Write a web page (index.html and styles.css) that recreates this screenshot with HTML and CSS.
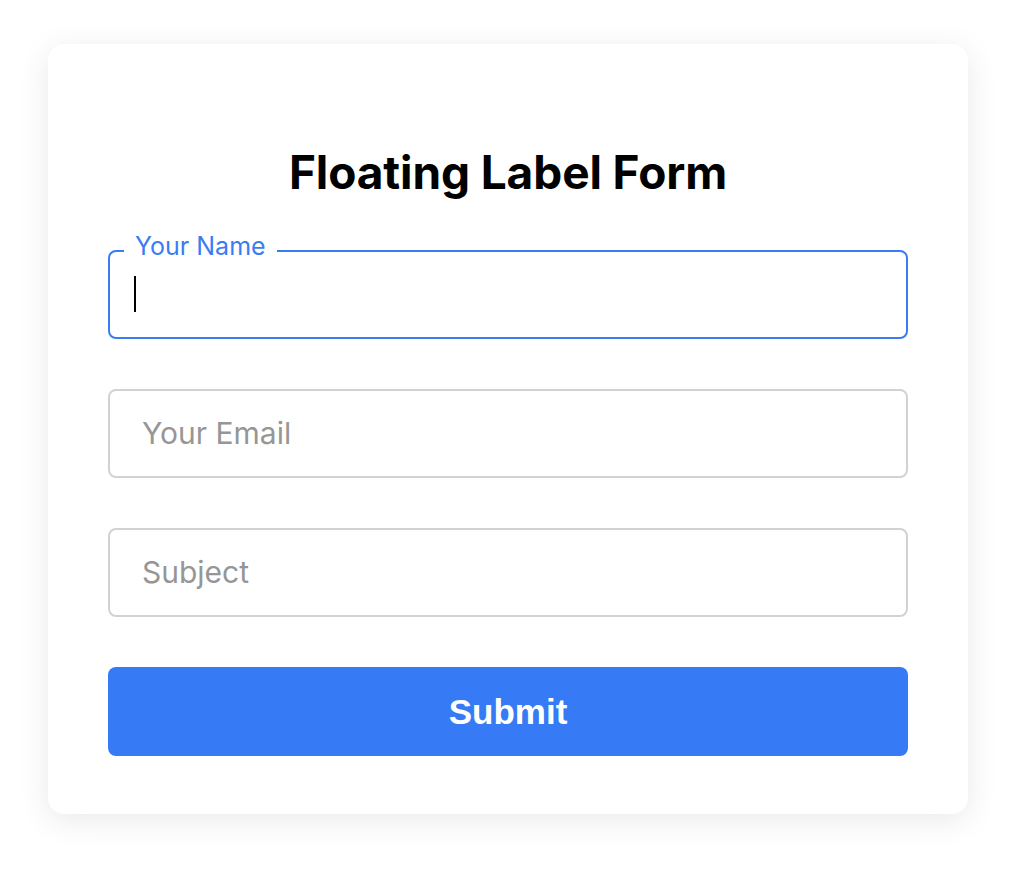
FILE: index.html
```html
<!DOCTYPE html>
<html lang="en">
<head>
<meta charset="utf-8">
<title>Floating Label Form</title>
<link rel="stylesheet" href="styles.css">
</head>
<body>
  <form class="card">
    <h1 class="title">Floating Label Form</h1>
    <div class="fields">
      <div class="field is-focused">
        <input class="input" type="text" id="name">
        <label class="float-label" for="name">Your Name</label>
        <span class="caret"></span>
      </div>
      <div class="field">
        <input class="input" type="email" id="email" placeholder="Your Email">
      </div>
      <div class="field">
        <input class="input" type="text" id="subject" placeholder="Subject">
      </div>
      <button class="submit" type="button">Submit</button>
    </div>
  </form>
</body>
</html>
```

FILE: styles.css
```css
* { box-sizing: border-box; }

html, body {
  margin: 0;
  background: #ffffff;
}

body {
  padding: 44px 56px 70px 48px;
  font-family: Inter, "Noto Sans", sans-serif;
}

.card {
  width: 920px;
  background: #ffffff;
  border-radius: 16px;
  box-shadow: 0 6px 32px rgba(0, 0, 0, 0.09);
  padding: 60px 60px 58px;
}

.title {
  margin: 40px 0 0;
  font-family: Inter, sans-serif;
  font-weight: 700;
  font-size: 46px;
  line-height: 56px;
  text-align: center;
  color: #000000;
  letter-spacing: -0.1px;
}

.fields {
  display: flex;
  flex-direction: column;
  gap: 50px;
  margin-top: 50px;
}

.field {
  position: relative;
}

.input {
  display: block;
  width: 100%;
  height: 89px;
  padding: 0 32px 2px;
  border: 2px solid #d2d2d2;
  border-radius: 8px;
  font-family: Inter, sans-serif;
  font-size: 30px;
  color: #222;
  background: #fff;
  outline: none;
}

.input::placeholder {
  color: #969696;
}

.field.is-focused .input {
  border-color: #3a7cf2;
}

.float-label {
  position: absolute;
  left: 16px;
  top: -19px;
  padding: 0 11px;
  background: #ffffff;
  font-family: Inter, sans-serif;
  font-size: 25px;
  line-height: 30px;
  color: #3a7cf2;
}

.caret {
  position: absolute;
  left: 26px;
  top: 26px;
  width: 2px;
  height: 36px;
  background: #000;
}

.submit {
  display: block;
  width: 100%;
  height: 89px;
  border: none;
  border-radius: 8px;
  background: #377af5;
  color: #ffffff;
  font-family: "Liberation Sans", Arial, sans-serif;
  font-weight: 700;
  font-size: 35px;
  cursor: pointer;
}
```
